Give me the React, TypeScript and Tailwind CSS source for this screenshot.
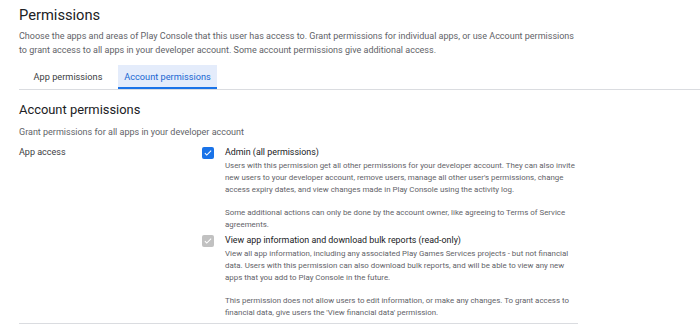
import React from "react";

function Check({ disabled }: { disabled?: boolean }) {
  return (
    <div
      className={
        "w-[12px] h-[12px] rounded-[2px] flex items-center justify-center shrink-0 " +
        (disabled ? "bg-[#c1c1c1]" : "bg-[#1a73e8]")
      }
    >
      <svg width="10" height="10" viewBox="0 0 24 24">
        <path d="M4.5 12.5l4.5 4.5 10.5-10.5" fill="none" stroke="#fff" strokeWidth="2.6" />
      </svg>
    </div>
  );
}

export default function App() {
  return (
    <div className="w-[700px] h-[331px] bg-white overflow-hidden font-['Roboto',sans-serif]">
      <div className="pl-[19px]">
        <h1 className="pt-[5px] text-[14.7px] leading-[20px] text-[#202124]">Permissions</h1>
        <p className="mt-[4px] text-[9px] leading-[14px] text-[#5f6368] whitespace-nowrap">
          Choose the apps and areas of Play Console that this user has access to. Grant permissions for individual apps, or use Account permissions
          <br />
          to grant access to all apps in your developer account. Some account permissions give additional access.
        </p>
        <div className="mt-[8px] h-[25px] flex border-b border-[#dadce0]">
          <div className="ml-[8px] w-[82px] h-[24px] flex items-center justify-center text-[9.2px] text-[#3c4043]">
            App permissions
          </div>
          <div className="ml-[9px] w-[99px] h-[24px] flex items-center justify-center text-[9.2px] text-[#1967d2] bg-[#e4ecfb] border-b-2 border-[#1a73e8] pt-[2px]">
            Account permissions
          </div>
        </div>
        <h2 className="mt-[12px] text-[12.9px] leading-[16px] text-[#202124]">Account permissions</h2>
        <p className="mt-[8px] text-[9px] leading-[12px] text-[#5f6368]">
          Grant permissions for all apps in your developer account
        </p>
        <div className="mt-[8px] flex">
          <div className="w-[183px] text-[9px] leading-[12px] text-[#3c4043]">App access</div>
          <div className="flex flex-col">
            <div className="flex gap-[11px]">
              <div className="pt-[1px]">
                <Check />
              </div>
              <div>
                <div className="text-[8.9px] leading-[13px] text-[#202124]">Admin (all permissions)</div>
                <div className="mt-[1px] text-[7.9px] leading-[12px] text-[#5f6368] whitespace-nowrap">
                  Users with this permission get all other permissions for your developer account. They can also invite
                  <br />
                  new users to your developer account, remove users, manage all other user's permissions, change
                  <br />
                  access expiry dates, and view changes made in Play Console using the activity log.
                </div>
                <div className="mt-[11px] text-[7.9px] leading-[12px] text-[#5f6368] whitespace-nowrap">
                  Some additional actions can only be done by the account owner, like agreeing to Terms of Service
                  <br />
                  agreements.
                </div>
              </div>
            </div>
            <div className="mt-[3px] flex gap-[11px]">
              <div className="pt-[1px]">
                <Check disabled />
              </div>
              <div>
                <div className="text-[8.9px] leading-[13px] text-[#202124]">
                  View app information and download bulk reports (read-only)
                </div>
                <div className="mt-[1px] text-[7.9px] leading-[12px] text-[#5f6368] whitespace-nowrap">
                  View all app information, including any associated Play Games Services projects - but not financial
                  <br />
                  data. Users with this permission can also download bulk reports, and will be able to view any new
                  <br />
                  apps that you add to Play Console in the future.
                </div>
                <div className="mt-[11px] text-[7.9px] leading-[12px] text-[#5f6368] whitespace-nowrap">
                  This permission does not allow users to edit information, or make any changes. To grant access to
                  <br />
                  financial data, give users the 'View financial data' permission.
                </div>
              </div>
            </div>
          </div>
        </div>
        <div className="mt-[4px] w-[559px] h-px bg-[#dadce0]" />
      </div>
    </div>
  );
}
